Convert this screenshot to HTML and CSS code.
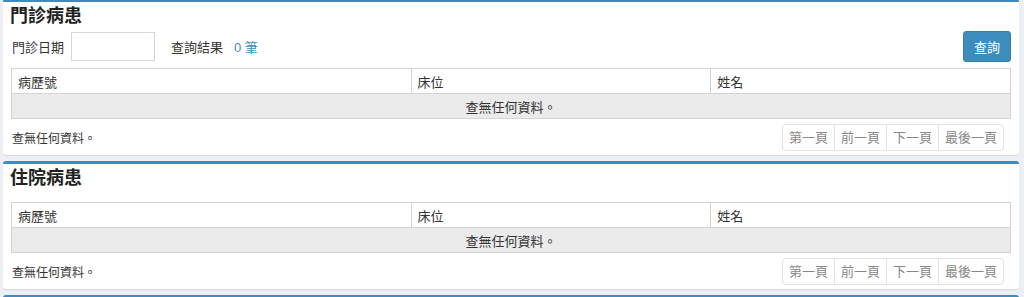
FILE: index.html
```html
<!DOCTYPE html>
<html lang="zh-Hant">
<head>
<meta charset="utf-8">
<link rel="stylesheet" href="styles.css">
</head>
<body>
<div class="page">
  <section class="box box-first">
    <div class="box-header"><h3 class="box-title">門診病患</h3></div>
    <div class="box-body">
      <div class="form-row">
        <label class="form-label">門診日期</label>
        <input class="form-input" type="text">
        <span class="result-label">查詢結果</span>
        <span class="result-count">0 筆</span>
        <button class="btn-query" type="button">查詢</button>
      </div>
      <table class="grid grid-after-form">
        <thead>
          <tr><th class="col-a">病歷號</th><th class="col-b">床位</th><th class="col-c">姓名</th></tr>
        </thead>
        <tbody>
          <tr class="empty-row"><td colspan="3">查無任何資料。</td></tr>
        </tbody>
      </table>
      <div class="footer-row">
        <span class="footer-info">查無任何資料。</span>
        <ul class="pager">
          <li>第一頁</li><li>前一頁</li><li>下一頁</li><li>最後一頁</li>
        </ul>
      </div>
    </div>
  </section>

  <section class="box">
    <div class="box-header"><h3 class="box-title">住院病患</h3></div>
    <div class="box-body">
      <table class="grid grid-top">
        <thead>
          <tr><th class="col-a">病歷號</th><th class="col-b">床位</th><th class="col-c">姓名</th></tr>
        </thead>
        <tbody>
          <tr class="empty-row"><td colspan="3">查無任何資料。</td></tr>
        </tbody>
      </table>
      <div class="footer-row">
        <span class="footer-info">查無任何資料。</span>
        <ul class="pager">
          <li>第一頁</li><li>前一頁</li><li>下一頁</li><li>最後一頁</li>
        </ul>
      </div>
    </div>
  </section>

  <section class="box box-empty"></section>
</div>
</body>
</html>
```

FILE: styles.css
```css
* { box-sizing: border-box; }

html, body {
  margin: 0;
  padding: 0;
  background: #ecf0f5;
  overflow: hidden;
}

body {
  font-family: "Liberation Sans", "Noto Sans CJK TC", sans-serif;
  font-size: 13px;
  color: #333;
}

.page {
  padding: 0 5px 0 3px;
}

.box {
  background: #fff;
  border-top: 3px solid #3c8dbc;
  border-radius: 3px;
  box-shadow: 0 1px 1px rgba(0, 0, 0, 0.1);
  margin-bottom: 6px;
}

.box-first {
  margin-top: -1px;
}

.box-empty {
  height: 40px;
}

.box-header {
  height: 25px;
  padding: 0 7px;
  display: flex;
  align-items: center;
}

.box-title {
  margin: 0;
  font-size: 18px;
  font-weight: 700;
  color: #222;
  line-height: 25px;
  font-family: "Noto Sans CJK TC", sans-serif;
}

.box-body {
  padding: 0 8px 4px;
}

.form-row {
  margin-top: 4px;
  height: 31px;
  display: flex;
  align-items: center;
}

.form-label {
  margin-left: 1px;
  color: #333;
}

.form-input {
  margin-left: 7px;
  width: 84px;
  height: 29px;
  border: 1px solid #d2d6de;
  border-radius: 0;
  padding: 0 6px;
  font: inherit;
}

.result-label {
  margin-left: 16px;
}

.result-count {
  margin-left: 11px;
  color: #3c8dbc;
}

.btn-query {
  margin-left: auto;
  width: 48px;
  height: 31px;
  background: #3c8dbc;
  border: 1px solid #367fa9;
  border-radius: 3px;
  color: #fff;
  font: inherit;
  padding: 0;
}

.grid {
  width: 100%;
  border-collapse: collapse;
  table-layout: fixed;
}

.grid-after-form { margin-top: 6px; }
.grid-top { margin-top: 13px; }

.col-a { width: 40%; }
.col-b { width: 30%; }
.col-c { width: 30%; }

.grid th {
  height: 25px;
  border: 1px solid #d4d4d4;
  text-align: left;
  font-weight: normal;
  padding: 0 6px;
  color: #333;
}

.empty-row td {
  height: 25px;
  background: #ebebeb;
  border: 1px solid #d4d4d4;
  text-align: center;
  padding: 0;
  color: #333;
}

.footer-row {
  margin-top: 5px;
  height: 27px;
  display: flex;
  align-items: center;
  justify-content: space-between;
}

.footer-info {
  margin-left: 1px;
  font-size: 12px;
}

.pager {
  display: flex;
  list-style: none;
  margin: 0 7px 0 0;
  padding: 0;
  height: 27px;
}

.pager li {
  height: 27px;
  line-height: 25px;
  padding: 0 6px;
  border: 1px solid #e2e2e2;
  margin-left: -1px;
  color: #888;
  background: #fff;
}

.pager li:first-child {
  border-radius: 4px 0 0 4px;
}

.pager li:last-child {
  border-radius: 0 4px 4px 0;
}
```
